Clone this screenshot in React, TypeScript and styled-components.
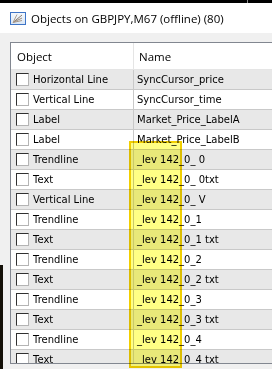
import React from 'react';
import styled, { createGlobalStyle } from 'styled-components';

const Global = createGlobalStyle`
  html, body { margin: 0; padding: 0; background: #000; }
  body { width: 272px; height: 369px; overflow: hidden; }
`;

const Screen = styled.div`
  position: relative;
  width: 272px;
  height: 369px;
  overflow: hidden;
  background: #000;
  display: flex;
  flex-direction: column;
`;

const TopStrip = styled.div`
  flex: none;
  height: 3px;
  background: linear-gradient(to right, #000 247px, #8c8c8c 247px, #8c8c8c 248px, #000 248px);
`;

const Window = styled.div`
  flex: 1;
  min-height: 0;
  display: flex;
  flex-direction: column;
  background: #f0f0f0;
`;

const TitleBar = styled.div`
  flex: none;
  height: 30px;
  background: #fff;
  display: flex;
  align-items: center;
  gap: 5px;
  padding-left: 10px;
  font-family: "Open Sans", "Noto Sans", sans-serif;
  font-size: 11.5px;
  color: #000;
  white-space: nowrap;
`;

const Body = styled.div`
  flex: 1;
  min-height: 0;
  padding: 9px 0 0 10px;
  display: flex;
  flex-direction: column;
`;

const ListBox = styled.div`
  box-sizing: border-box;
  height: 322px;
  border: 1px solid #828790;
  border-right: none;
  background: #fff;
  overflow: hidden;
`;

const Header = styled.div`
  display: grid;
  grid-template-columns: 123px 1fr;
  height: 27px;
  box-sizing: border-box;
  border-bottom: 1px solid #e5e5e5;
  font-family: "Open Sans", "Noto Sans", sans-serif;
  font-size: 11.5px;
  color: #000;
`;

const HeaderCell = styled.div<{ $first?: boolean }>`
  display: flex;
  align-items: center;
  padding-left: ${p => (p.$first ? '6px' : '5px')};
  border-right: ${p => (p.$first ? '1px solid #e5e5e5' : 'none')};
  box-sizing: border-box;
`;

const Row = styled.div<{ $alt: boolean }>`
  display: grid;
  grid-template-columns: 123px 1fr;
  height: 20px;
  box-sizing: border-box;
  border-bottom: 1px solid #c9c9c9;
  background: ${p => (p.$alt ? '#e8e8e8' : '#ffffff')};
  font-family: "DejaVu Sans", Verdana, sans-serif;
  font-size: 10px;
  color: #000;
  white-space: nowrap;
`;

const ObjectCell = styled.div`
  display: flex;
  align-items: center;
  gap: 4px;
  padding-left: 5px;
  border-right: 1px solid #c9c9c9;
  box-sizing: border-box;
`;

const NameCell = styled.div`
  display: flex;
  align-items: center;
  padding-left: 3px;
`;

const CheckBox = styled.span`
  flex: none;
  width: 13px;
  height: 13px;
  box-sizing: border-box;
  background: #fff;
  border-top: 1px solid #303030;
  border-left: 1px solid #303030;
  border-right: 1px solid #b4b4b4;
  border-bottom: 1px solid #b4b4b4;
`;

const Highlight = styled.div`
  position: absolute;
  left: 129px;
  top: 141px;
  width: 53px;
  height: 227px;
  box-sizing: border-box;
  border: 2px solid #f2cf00;
  background: rgba(255, 255, 0, 0.48);
  mix-blend-mode: multiply;
  pointer-events: none;
`;

const EdgeShadow = styled.div`
  position: absolute;
  left: 0;
  top: 265px;
  bottom: 0;
  width: 3px;
  background: #141008;
`;

const AppIcon = () => (
  <svg width="16" height="13" viewBox="0 0 16 13">
    <defs>
      <linearGradient id="ig" x1="0" y1="0" x2="0" y2="1">
        <stop offset="0" stopColor="#f4f8fd" />
        <stop offset="1" stopColor="#d9e6f5" />
      </linearGradient>
    </defs>
    <rect x="0.5" y="0.5" width="15" height="12" fill="url(#ig)" stroke="#3d74c6" />
    <path d="M3 10.5 L12 3" stroke="#8a7a6a" strokeWidth="1" />
    <path d="M3 10.5 L12 6" stroke="#9a8a7a" strokeWidth="1" />
    <path d="M3 10.5 L12 8.5" stroke="#a89888" strokeWidth="1" />
    <path d="M3 10.5 L7 2.5" stroke="#b0a090" strokeWidth="1" />
  </svg>
);

const rows: [string, string][] = [
  ['Horizontal Line', 'SyncCursor_price'],
  ['Vertical Line', 'SyncCursor_time'],
  ['Label', 'Market_Price_LabelA'],
  ['Label', 'Market_Price_LabelB'],
  ['Trendline', '_lev 142_0_ 0'],
  ['Text', '_lev 142_0_ 0txt'],
  ['Vertical Line', '_lev 142_0_ V'],
  ['Trendline', '_lev 142_0_1'],
  ['Text', '_lev 142_0_1 txt'],
  ['Trendline', '_lev 142_0_2'],
  ['Text', '_lev 142_0_2 txt'],
  ['Trendline', '_lev 142_0_3'],
  ['Text', '_lev 142_0_3 txt'],
  ['Trendline', '_lev 142_0_4'],
  ['Text', '_lev 142_0_4 txt'],
];

export default function App() {
  return (
    <>
      <Global />
      <Screen>
        <TopStrip />
        <Window>
          <TitleBar>
            <AppIcon />
            <span>Objects on GBPJPY,M67 (offline) (80)</span>
          </TitleBar>
          <Body>
            <ListBox>
              <Header>
                <HeaderCell $first>Object</HeaderCell>
                <HeaderCell>Name</HeaderCell>
              </Header>
              {rows.map(([obj, name], i) => (
                <Row key={i} $alt={i % 2 === 0}>
                  <ObjectCell>
                    <CheckBox />
                    <span>{obj}</span>
                  </ObjectCell>
                  <NameCell>{name}</NameCell>
                </Row>
              ))}
            </ListBox>
          </Body>
        </Window>
        <Highlight />
        <EdgeShadow />
      </Screen>
    </>
  );
}
